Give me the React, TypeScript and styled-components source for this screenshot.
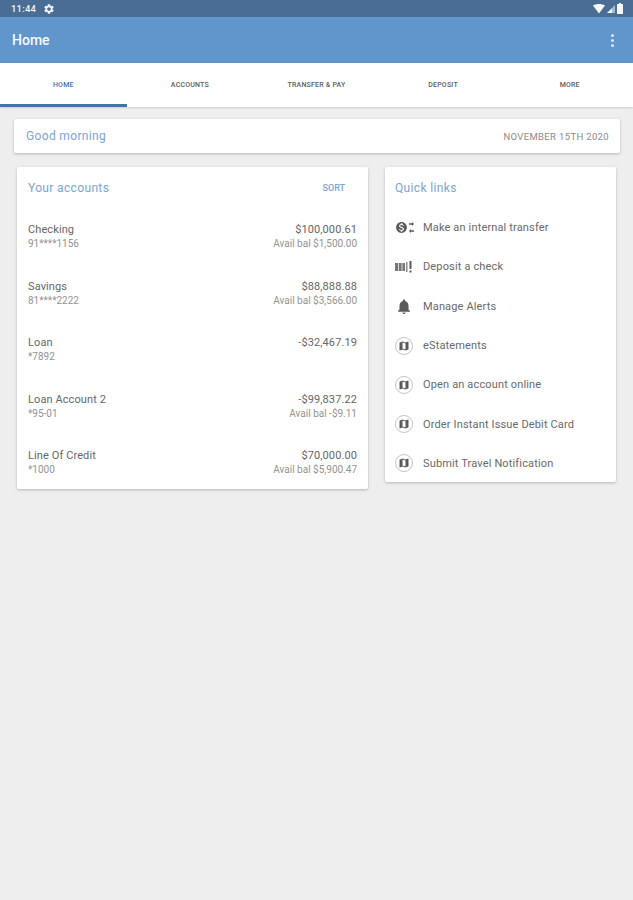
import { MdMonetizationOn, MdMap, MdNotifications, MdSettings } from "react-icons/md";
import styled, { createGlobalStyle } from "styled-components";

const GlobalStyle = createGlobalStyle`
  html, body {
    margin: 0;
    padding: 0;
    background: #eeeeee;
    font-family: Roboto, "Liberation Sans", sans-serif;
  }
`;

const Page = styled.div`
  width: 633px;
  height: 900px;
  overflow: hidden;
  background: #eeeeee;
`;

const StatusBar = styled.div`
  height: 17px;
  padding: 0 10px 0 11px;
  display: flex;
  align-items: center;
  justify-content: space-between;
  background: #4a6d96;
  color: #f2f5f8;
  font-size: 9.5px;
  font-weight: 500;
  letter-spacing: 0.2px;
`;

const StatusGroup = styled.div<{ $tight?: boolean }>`
  display: flex;
  align-items: center;
  gap: ${(p) => (p.$tight ? "2px" : "7px")};
`;

const AppBar = styled.div`
  height: 46px;
  padding: 0 19px 0 12px;
  display: flex;
  align-items: center;
  justify-content: space-between;
  background: #6096cb;
  color: #f7fafd;
  font-size: 14px;
  font-weight: 500;
`;

const MoreDots = styled.div`
  display: flex;
  flex-direction: column;
  gap: 2px;
`;

const Dot = styled.span`
  width: 3px;
  height: 3px;
  border-radius: 50%;
  background: #dce9f5;
`;

const Tabs = styled.div`
  height: 44px;
  display: grid;
  grid-template-columns: repeat(5, 1fr);
  background: #ffffff;
  box-shadow: 0 1px 2px rgba(0, 0, 0, 0.14);
`;

const Tab = styled.div<{ $active?: boolean }>`
  display: flex;
  align-items: center;
  justify-content: center;
  box-sizing: border-box;
  padding-top: 3px;
  font-size: 7px;
  font-weight: 500;
  letter-spacing: 0.2px;
  color: ${(p) => (p.$active ? "#3f73ad" : "#5c5c5c")};
  border-bottom: 3px solid ${(p) => (p.$active ? "#3f73ad" : "transparent")};
`;

const Content = styled.div`
  padding: 12px 13px 0 14px;
`;

const Card = styled.div`
  background: #ffffff;
  border-radius: 2px;
  box-shadow: 0 1px 3px rgba(0, 0, 0, 0.24);
`;

const Greeting = styled(Card)`
  height: 34px;
  padding: 0 11px 0 12px;
  display: flex;
  align-items: center;
  justify-content: space-between;
`;

const BlueTitle = styled.div`
  color: #7ba5d4;
  font-size: 12px;
  letter-spacing: 0.35px;
`;

const DateText = styled.div`
  color: #8a8a8a;
  font-size: 9.5px;
  letter-spacing: 0.35px;
`;

const Columns = styled.div`
  margin: 14px 4px 0 3px;
  display: grid;
  grid-template-columns: 351px 231px;
  gap: 17px;
  align-items: start;
`;

const AccountsCard = styled(Card)`
  height: 322px;
  padding: 0 11px;
  box-sizing: border-box;
`;

const CardHead = styled.div`
  height: 41px;
  display: flex;
  align-items: center;
  justify-content: space-between;
`;

const SortButton = styled.div`
  margin-right: 12px;
  color: #7ba5d4;
  font-size: 9px;
  font-weight: 500;
`;

const AccountRow = styled.div`
  height: 56.5px;
  padding-top: 15px;
  box-sizing: border-box;
  display: flex;
  justify-content: space-between;
`;

const Side = styled.div<{ $right?: boolean }>`
  display: flex;
  flex-direction: column;
  gap: 2px;
  text-align: ${(p) => (p.$right ? "right" : "left")};
`;

const Primary = styled.div`
  color: #666666;
  font-size: 11px;
  line-height: 13px;
  letter-spacing: 0.1px;
`;

const Secondary = styled.div`
  color: #939393;
  font-size: 10px;
  line-height: 11px;
`;

const LinksCard = styled(Card)`
  height: 315px;
  padding: 0 10px;
  box-sizing: border-box;
`;

const LinkRow = styled.div`
  height: 39.3px;
  display: flex;
  align-items: center;
  gap: 10px;
  color: #696969;
  font-size: 11px;
  letter-spacing: 0.15px;
`;

const IconSlot = styled.div`
  width: 18px;
  height: 18px;
  flex: none;
  display: flex;
  align-items: center;
  justify-content: center;
  color: #5a5a5a;
`;

const RoundIcon = styled(IconSlot)`
  box-sizing: border-box;
  border: 1px solid #c4c4c4;
  border-radius: 50%;
`;

const TransferGlyph = styled.div`
  display: flex;
  align-items: center;
  gap: 1px;
`;

const Wifi = () => (
  <svg width="12" height="10" viewBox="0 0 12 10">
    <path d="M0 1.5C3.500-.5 8.500-.5 12 1.500L6 9.500z" fill="#f5f7fa" />
  </svg>
);

const Signal = () => (
  <svg width="8" height="8" viewBox="0 0 8 8">
    <path d="M8 0v8H0z" fill="#a9bad0" />
    <path d="M5 3.500V8H0z" fill="#f5f7fa" />
  </svg>
);

const Battery = () => (
  <svg width="6" height="11" viewBox="0 0 6 11">
    <path d="M2 0h2v1h1.500a.5.500 0 0 1 .5.500V10.500a.5.500 0 0 1-.5.500H.5a.5.500 0 0 1-.5-.5V1.500A.5.500 0 0 1 .5 1H2z" fill="#f5f7fa" />
  </svg>
);

const TransferArrows = () => (
  <svg width="5" height="11" viewBox="0 0 5 11">
    <path d="M0 1.300h3V0l2 2-2 2V2.700H0zM5 8.300H2V7L0 9l2 2V9.700h3z" fill="#5a5a5a" />
  </svg>
);

const CheckIcon = () => (
  <svg width="18" height="12" viewBox="0 0 18 12">
    <rect x="0" y="2" width="10" height="8" fill="#777777" />
    <rect x="3" y="2" width="1" height="8" fill="#d8d8d8" />
    <rect x="6.500" y="2" width="1" height="8" fill="#d8d8d8" />
    <rect x="11" y="1" width="1.500" height="10" fill="#8a8a8a" />
    <rect x="14.500" y="0" width="2" height="8" fill="#5a5a5a" />
    <rect x="14.500" y="9.500" width="2" height="2" fill="#5a5a5a" />
  </svg>
);

const accounts = [
  { name: "Checking", number: "91****1156", balance: "$100,000.61", avail: "Avail bal $1,500.00" },
  { name: "Savings", number: "81****2222", balance: "$88,888.88", avail: "Avail bal $3,566.00" },
  { name: "Loan", number: "*7892", balance: "-$32,467.19" },
  { name: "Loan Account 2", number: "*95-01", balance: "-$99,837.22", avail: "Avail bal -$9.11" },
  { name: "Line Of Credit", number: "*1000", balance: "$70,000.00", avail: "Avail bal $5,900.47" },
];

const mapLinks = [
  "eStatements",
  "Open an account online",
  "Order Instant Issue Debit Card",
  "Submit Travel Notification",
];

const tabs = ["HOME", "ACCOUNTS", "TRANSFER & PAY", "DEPOSIT", "MORE"];

export default function App() {
  return (
    <Page>
      <GlobalStyle />
      <StatusBar>
        <StatusGroup>
          <span>11:44</span>
          <MdSettings size={12} color="#f2f5f8" />
        </StatusGroup>
        <StatusGroup $tight>
          <Wifi />
          <Signal />
          <Battery />
        </StatusGroup>
      </StatusBar>
      <AppBar>
        <span>Home</span>
        <MoreDots>
          <Dot />
          <Dot />
          <Dot />
        </MoreDots>
      </AppBar>
      <Tabs>
        {tabs.map((tab, i) => (
          <Tab key={tab} $active={i === 0}>
            {tab}
          </Tab>
        ))}
      </Tabs>
      <Content>
        <Greeting>
          <BlueTitle>Good morning</BlueTitle>
          <DateText>NOVEMBER 15TH 2020</DateText>
        </Greeting>
        <Columns>
          <AccountsCard>
            <CardHead>
              <BlueTitle>Your accounts</BlueTitle>
              <SortButton>SORT</SortButton>
            </CardHead>
            {accounts.map((account) => (
              <AccountRow key={account.name}>
                <Side>
                  <Primary>{account.name}</Primary>
                  <Secondary>{account.number}</Secondary>
                </Side>
                <Side $right>
                  <Primary>{account.balance}</Primary>
                  {account.avail && <Secondary>{account.avail}</Secondary>}
                </Side>
              </AccountRow>
            ))}
          </AccountsCard>
          <LinksCard>
            <CardHead>
              <BlueTitle>Quick links</BlueTitle>
            </CardHead>
            <LinkRow>
              <IconSlot>
                <TransferGlyph>
                  <MdMonetizationOn size={13} />
                  <TransferArrows />
                </TransferGlyph>
              </IconSlot>
              Make an internal transfer
            </LinkRow>
            <LinkRow>
              <IconSlot>
                <CheckIcon />
              </IconSlot>
              Deposit a check
            </LinkRow>
            <LinkRow>
              <IconSlot>
                <MdNotifications size={19} />
              </IconSlot>
              Manage Alerts
            </LinkRow>
            {mapLinks.map((label) => (
              <LinkRow key={label}>
                <RoundIcon>
                  <MdMap size={12} />
                </RoundIcon>
                {label}
              </LinkRow>
            ))}
          </LinksCard>
        </Columns>
      </Content>
    </Page>
  );
}
